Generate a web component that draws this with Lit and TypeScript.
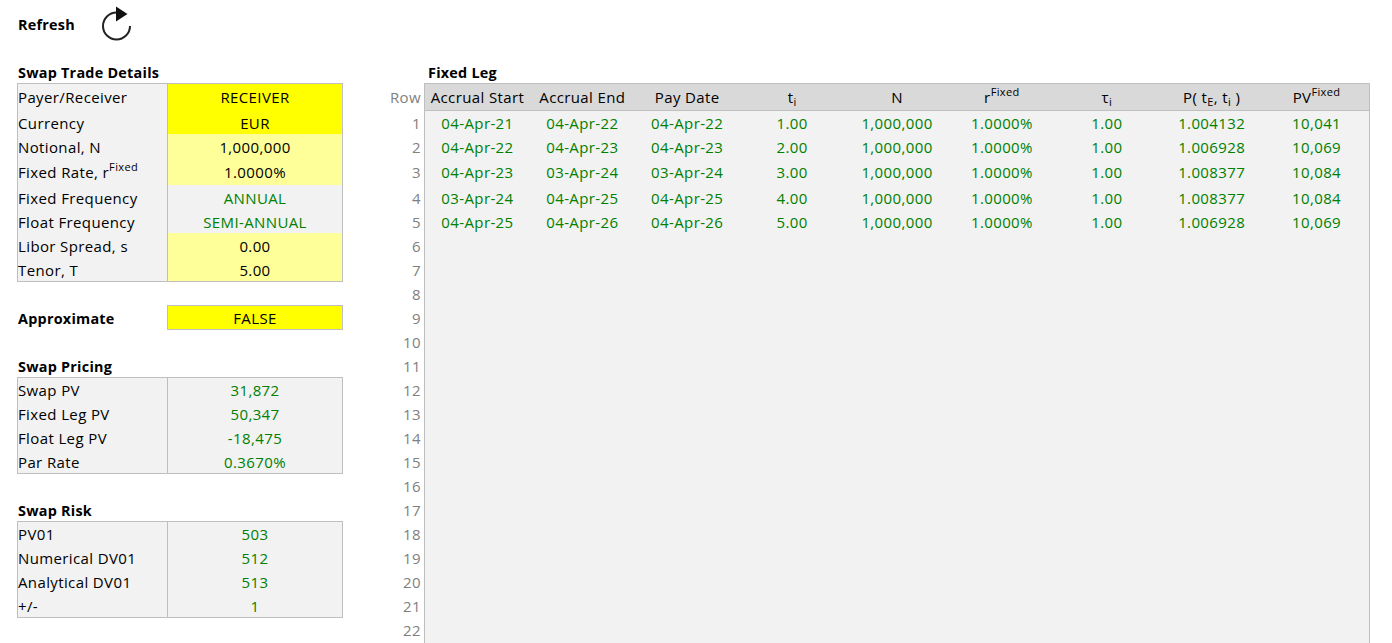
import { LitElement, html, css } from "lit";
import { customElement } from "lit/decorators.js";

type Row = { label: unknown; value: string; tone: string; h?: string };

const trade: Row[] = [
  { label: "Payer/Receiver", value: "RECEIVER", tone: "yellow", h: "h26" },
  { label: "Currency", value: "EUR", tone: "yellow" },
  { label: "Notional, N", value: "1,000,000", tone: "pale" },
  { label: html`Fixed Rate, r<span class="sup">Fixed</span>`, value: "1.0000%", tone: "pale", h: "h27" },
  { label: "Fixed Frequency", value: "ANNUAL", tone: "green" },
  { label: "Float Frequency", value: "SEMI-ANNUAL", tone: "green" },
  { label: "Libor Spread, s", value: "0.00", tone: "pale" },
  { label: "Tenor, T", value: "5.00", tone: "pale" },
];
const pricing: Row[] = [
  { label: "Swap PV", value: "31,872", tone: "green" },
  { label: "Fixed Leg PV", value: "50,347", tone: "green" },
  { label: "Float Leg PV", value: "-18,475", tone: "green" },
  { label: "Par Rate", value: "0.3670%", tone: "green", h: "h23" },
];
const risk: Row[] = [
  { label: "PV01", value: "503", tone: "green" },
  { label: "Numerical DV01", value: "512", tone: "green" },
  { label: "Analytical DV01", value: "513", tone: "green" },
  { label: "+/-", value: "1", tone: "green", h: "h23" },
];
const legs = [
  ["04-Apr-21", "04-Apr-22", "04-Apr-22", "1.00", "1,000,000", "1.0000%", "1.00", "1.004132", "10,041"],
  ["04-Apr-22", "04-Apr-23", "04-Apr-23", "2.00", "1,000,000", "1.0000%", "1.00", "1.006928", "10,069"],
  ["04-Apr-23", "03-Apr-24", "03-Apr-24", "3.00", "1,000,000", "1.0000%", "1.00", "1.008377", "10,084"],
  ["03-Apr-24", "04-Apr-25", "04-Apr-25", "4.00", "1,000,000", "1.0000%", "1.00", "1.008377", "10,084"],
  ["04-Apr-25", "04-Apr-26", "04-Apr-26", "5.00", "1,000,000", "1.0000%", "1.00", "1.006928", "10,069"],
];
const rowHeight = (i: number) => (i === 0 ? "first" : i === 2 ? "h27" : "");

@customElement("app-root")
export class AppRoot extends LitElement {
  static styles = css`
    :host {
      display: block;
      width: 1392px;
      height: 643px;
      overflow: hidden;
      background: #fff;
      color: #000;
      font-family: "Open Sans", Lato, sans-serif;
      font-size: 15px;
      letter-spacing: 0.38px;
    }
    .refresh {
      display: flex;
      align-items: center;
      height: 48px;
      padding-left: 18px;
      font-weight: 700;
      font-size: 14.4px;
      letter-spacing: 0.25px;
    }
    .refresh span { width: 83px; }
    .refresh svg { display: block; }
    .sheet {
      display: flex;
      padding-top: 12px;
      height: 583px;
      overflow: hidden;
    }
    .left {
      width: 326px;
      margin-left: 17px;
      margin-right: 37px;
      flex: none;
    }
    .title {
      height: 24px;
      line-height: 25px;
      font-weight: 700;
      font-size: 14.4px;
      letter-spacing: 0.25px;
      padding-left: 1px;
      white-space: nowrap;
    }
    .spacer { height: 24px; }
    .spacer.short { height: 23px; }
    .box {
      border: 1px solid #bfbfbf;
      margin-top: -1px;
    }
    .row {
      display: grid;
      grid-template-columns: 150px 1fr;
      grid-template-rows: 100%;
      height: 24px;
      line-height: 26px;
    }
    .row.h26 { height: 26px; line-height: 26px; }
    .row.h27 { height: 27px; line-height: 28px; }
    .row.h23 { height: 23px; }
    .box.tight .row { line-height: 24px; }
    .label {
      background: #f2f2f2;
      border-right: 1px solid #bfbfbf;
      white-space: nowrap;
    }
    .value { text-align: center; }
    .yellow { background: #ffff00; }
    .pale { background: #ffff99; }
    .green { background: #f2f2f2; color: #008000; }
    .approx {
      display: grid;
      grid-template-columns: 150px 1fr;
      grid-template-rows: 100%;
      height: 25px;
      line-height: 24px;
    }
    .approx .title { line-height: 27px; }
    .approx .value { border: 1px solid #bfbfbf; }
    .right { width: 990px; flex: none; }
    .right .title { margin-left: 44px; padding-left: 4px; }
    .grid {
      display: grid;
      grid-template-columns: 44px 1fr;
      height: 560px;
    }
    .rownums { color: #808080; text-align: right; }
    .rownums div { height: 24px; line-height: 26px; padding-right: 3px; }
    .rownums .h26 { height: 26px; line-height: 26px; }
    .rownums .h27 { height: 27px; line-height: 28px; }
    .panel {
      background: #f2f2f2;
      border-left: 1px solid #bfbfbf;
      border-right: 1px solid #bfbfbf;
      border-top: 1px solid #bfbfbf;
      margin-top: -1px;
      width: 944px;
    }
    .tr {
      display: grid;
      grid-template-columns: repeat(9, 1fr);
      grid-template-rows: 100%;
      height: 24px;
      line-height: 26px;
      text-align: center;
      color: #008000;
    }
    .tr.first { height: 23px; line-height: 24px; }
    .tr.h27 { height: 27px; line-height: 28px; }
    .tr.head {
      height: 27px;
      line-height: 26px;
      background: #d9d9d9;
      color: #000;
      box-shadow: inset 0 -1px 0 #bfbfbf;
    }
    .sup { font-size: 11px; position: relative; top: -7px; }
    .sub { font-size: 11px; position: relative; top: 3px; }
  `;

  private box(rows: Row[], tight = false) {
    return html`<div class="box ${tight ? "tight" : ""}">
      ${rows.map(
        (r) => html`<div class="row ${r.h ?? ""}">
          <div class="label">${r.label}</div>
          <div class="value ${r.tone}">${r.value}</div>
        </div>`
      )}
    </div>`;
  }

  render() {
    const nums = Array.from({ length: 22 }, (_, i) => i + 1);
    return html`
      <div class="refresh">
        <span>Refresh</span>
        <svg width="32" height="38" viewBox="101 5 32 38" fill="none">
          <path d="M116.5 12.5 A13.5 13.5 0 1 0 130 26" stroke="#222" stroke-width="2" />
          <path d="M116 6.5 L127.5 14 L116 21.5 Z" fill="#111" />
        </svg>
      </div>
      <div class="sheet">
        <div class="left">
          <div class="title">Swap Trade Details</div>
          ${this.box(trade)}
          <div class="spacer short"></div>
          <div class="approx">
            <div class="title">Approximate</div>
            <div class="value yellow">FALSE</div>
          </div>
          <div class="spacer"></div>
          <div class="title">Swap Pricing</div>
          ${this.box(pricing, true)}
          <div class="spacer"></div>
          <div class="title">Swap Risk</div>
          ${this.box(risk, true)}
        </div>
        <div class="right">
          <div class="title">Fixed Leg</div>
          <div class="grid">
            <div class="rownums">
              <div class="h26">Row</div>
              ${nums.map((n) => html`<div class=${n === 3 ? "h27" : ""}>${n}</div>`)}
            </div>
            <div class="panel">
              <div class="tr head">
                <div>Accrual Start</div>
                <div>Accrual End</div>
                <div>Pay Date</div>
                <div>t<span class="sub">i</span></div>
                <div>N</div>
                <div>r<span class="sup">Fixed</span></div>
                <div>τ<span class="sub">i</span></div>
                <div>P( t<span class="sub">E</span>, t<span class="sub">i</span> )</div>
                <div>PV<span class="sup">Fixed</span></div>
              </div>
              ${legs.map(
                (l, i) => html`<div class="tr ${rowHeight(i)}">
                  ${l.map((c) => html`<div>${c}</div>`)}
                </div>`
              )}
            </div>
          </div>
        </div>
      </div>
    `;
  }
}
